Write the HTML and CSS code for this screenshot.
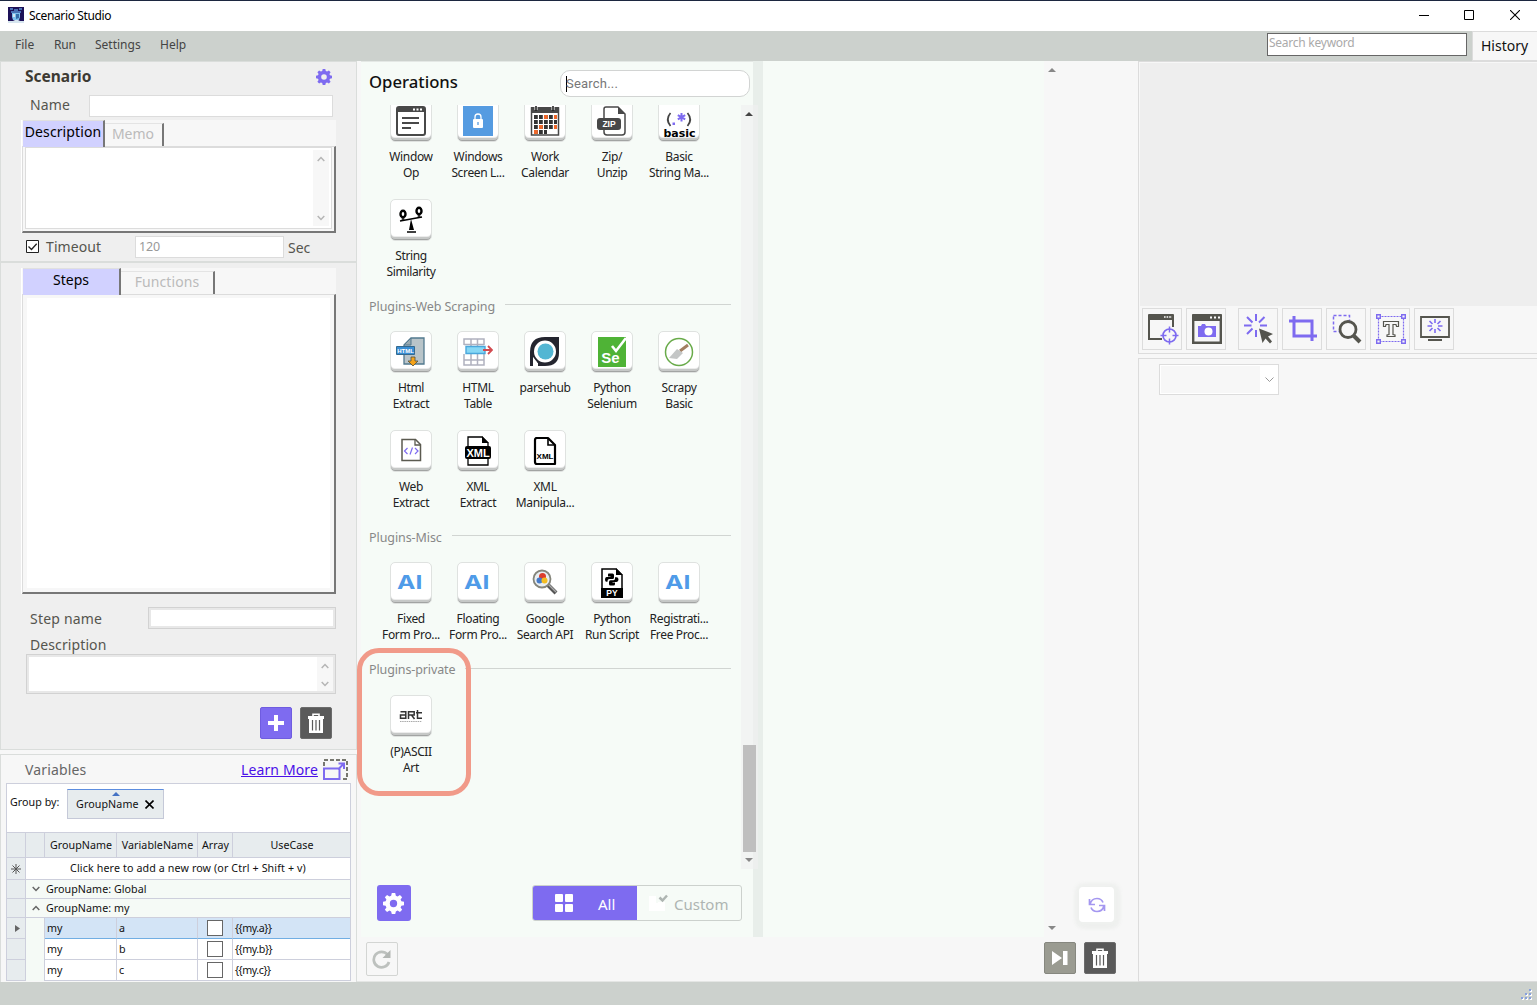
FILE: index.html
```html
<!DOCTYPE html>
<html lang="en">
<head>
<meta charset="utf-8">
<title>Scenario Studio</title>
<link rel="stylesheet" href="styles.css">
</head>
<body>
<svg class="defs" width="0" height="0">
  <symbol id="gear" viewBox="0 0 16 16"><path fill-rule="evenodd" d="M6.7 0h2.6l.5 2 1.3.6L12.900 1.500l1.700 1.700L13.400 5l.6 1.300 2 .4v2.600l-2 .5-.6 1.200 1.200 1.800-1.700 1.700-1.800-1.100-1.300.6-.5 2H6.700l-.5-2-1.300-.6-1.800 1.100-1.700-1.700L2.600 11 2 9.800l-2-.5V6.700l2-.4L2.600 5 1.400 3.200l1.700-1.700 1.800 1.100L6.200 2zM8 5.200a2.800 2.800 0 1 0 0 5.600 2.800 2.800 0 0 0 0-5.600z"/></symbol>
  <symbol id="trash" viewBox="0 0 16 20"><path fill="none" stroke="#fff" stroke-width="1.600" d="M5 3.500V1.200h6v2.300"/><path fill="#fff" d="M0 3h16v3H0zM1 6h14v14H1z"/><path stroke="#5a5a5a" stroke-width="1.200" d="M4.500 7v10.500M8 7v10.500M11.500 7v10.500"/></symbol>
  <symbol id="up" viewBox="0 0 8 6"><path fill="none" stroke="currentColor" stroke-width="1.500" d="M.7 5 4 1.500 7.300 5"/></symbol>
  <symbol id="down" viewBox="0 0 8 6"><path fill="none" stroke="currentColor" stroke-width="1.500" d="M.7 1 4 4.500 7.300 1"/></symbol>
</svg>

<header class="titlebar">
  <svg class="app-icon" width="16" height="16" viewBox="0 0 16 16"><path fill="#1d1158" d="M0 0h16v16H0z"/><path fill="#4972b5" d="M2 1h3v2H2zM6 2h4v2H6zM11 1h3v2h-3zM3 4h10v2H3z"/><path fill="#7cc0ee" d="M4 6h8v4l-1 3H5l-1-3z"/><path fill="#346ba8" d="M8 7h3v4l-3 1z"/><path fill="#d6e5ef" d="M5 7h2v3H5zM0 14h5l2-1h3l2 1h4v2H0z"/></svg>
  <span class="app-title">Scenario Studio</span>
  <div class="win-buttons">
    <svg width="10" height="10" viewBox="0 0 10 10"><path stroke="#000" d="M0 5.500h10"/></svg>
    <svg width="10" height="10" viewBox="0 0 10 10"><path fill="none" stroke="#000" d="M.5.5h9v9h-9z"/></svg>
    <svg width="10" height="10" viewBox="0 0 10 10"><path stroke="#000" stroke-width="1.100" d="m0 0 10 10M10 0 0 10"/></svg>
  </div>
</header>

<nav class="menubar">
  <span class="m-file">File</span><span class="m-run">Run</span><span class="m-settings">Settings</span><span class="m-help">Help</span>
  <div class="keyword">Search keyword</div>
  <div class="history">History</div>
</nav>

<main class="workspace">
  <aside class="left">
    <section class="panel scenario">
      <div class="scenario-head"><h1>Scenario</h1><svg width="16" height="16" fill="#7e6bf0"><use href="#gear"/></svg></div>
      <div class="name-row"><label>Name</label><div class="input"></div></div>
      <div class="tabs tabs-desc">
        <div class="tabstrip"><div class="tab on">Description</div><div class="tab off">Memo</div></div>
        <div class="tabbody"><div class="memo"><div class="vscroll"><svg width="8" height="6"><use href="#up"/></svg><svg width="8" height="6"><use href="#down"/></svg></div></div></div>
      </div>
      <div class="timeout-row">
        <svg width="13" height="13" viewBox="0 0 13 13"><path fill="#fff" stroke="#222" d="M.5.5h12v12H.5z"/><path fill="none" stroke="#222" stroke-width="1.300" d="m2.500 6.500 3 3L10.700 3.800"/></svg>
        <label class="t-label">Timeout</label><div class="input t-value">120</div><span class="t-sec">Sec</span>
      </div>
    </section>

    <section class="panel steps">
      <div class="tabs tabs-steps">
        <div class="tabstrip"><div class="tab on">Steps</div><div class="tab off">Functions</div></div>
        <div class="tabbody"><div class="list"></div></div>
      </div>
      <div class="step-row"><label>Step name</label><div class="thick"></div></div>
      <label class="desc-label">Description</label>
      <div class="thick step-desc"><div class="vscroll"><svg width="8" height="6"><use href="#up"/></svg><svg width="8" height="6"><use href="#down"/></svg></div></div>
      <div class="step-actions">
        <div class="btn violet"><svg width="16" height="16" viewBox="0 0 16 16"><path fill="#fff" d="M6 0h4v6h6v4h-6v6H6v-6H0V6h6z"/></svg></div>
        <div class="btn dark"><svg width="16" height="20"><use href="#trash"/></svg></div>
      </div>
    </section>

    <section class="panel variables">
      <div class="var-head"><span class="var-title">Variables</span><a class="learn">Learn More</a>
        <svg width="26" height="21" viewBox="0 0 26 21"><path fill="none" stroke="#77776f" stroke-width="2" stroke-dasharray="4 2" d="M1 7V1h23v19h-6"/><path fill="none" stroke="#7e6bf0" stroke-width="2" d="M1 9.500h15.500V20H1zM15 10.500l6-6M15.500 4.500H21V10"/></svg></div>
      <div class="grid">
        <div class="groupby"><span>Group by:</span><div class="chip"><i></i><span>GroupName</span><svg width="9" height="9" viewBox="0 0 9 9"><path stroke="#000" stroke-width="1.600" d="m.5.5 8 8M8.500.5l-8 8"/></svg></div></div>
        <div class="row head"><b></b><b></b><b>GroupName</b><b>VariableName</b><b>Array</b><b>UseCase</b></div>
        <div class="row wide add"><b class="mark"><svg width="10" height="10" viewBox="0 0 10 10"><path stroke="#555" d="M5 0v10M0 5h10M1.500 1.500l7 7M8.500 1.500l-7 7"/></svg></b><b class="addtext">Click here to add a new row (or Ctrl + Shift + v)</b></div>
        <div class="row wide group"><b class="mark"></b><b><svg width="8" height="6"><use href="#down"/></svg>GroupName: Global</b></div>
        <div class="row wide group"><b class="mark"></b><b><svg width="8" height="6"><use href="#up"/></svg>GroupName: my</b></div>
        <div class="row data sel"><b class="mark"><svg width="5" height="7" viewBox="0 0 5 7"><path fill="#666" d="M0 0l5 3.500L0 7z"/></svg></b><b></b><b>my</b><b>a</b><b><i></i></b><b>{{my.a}}</b></div>
        <div class="row data"><b class="mark"></b><b></b><b>my</b><b>b</b><b><i></i></b><b>{{my.b}}</b></div>
        <div class="row data"><b class="mark"></b><b></b><b>my</b><b>c</b><b><i></i></b><b>{{my.c}}</b></div>
      </div>
    </section>
  </aside>

  <section class="center">
    <div class="boards">
      <div class="ops">
        <div class="ops-head"><h2>Operations</h2><div class="search"><i></i>Search...</div></div>
        <div class="ops-body">
          <div class="catalog">
            <div class="tiles">
              <div class="op"><div class="tile"><svg viewBox="0 0 30 30"><rect x="1" y="1" width="28" height="28" rx="2" fill="#fff" stroke="#484848" stroke-width="2"/><path fill="#484848" d="M1 1h28v5H1z"/><path stroke="#fff" stroke-width="1.800" stroke-dasharray="2 1.500" d="M17 3.500h10"/><path stroke="#484848" stroke-width="1.800" d="M6 12h17M6 17h17M6 22h9"/></svg></div><p>Window<br>Op</p></div>
              <div class="op"><div class="tile"><svg viewBox="0 0 30 30"><path fill="#559be1" d="M0 0h30v30H0z"/><path fill="none" stroke="#fff" stroke-width="1.300" d="M12 14v-3a3 3 0 0 1 6 0v3"/><rect x="10" y="13" width="10" height="9" rx="1" fill="#fff"/><path stroke="#559be1" stroke-width="1.300" d="M15 16v3"/></svg></div><p>Windows<br>Screen L...</p></div>
              <div class="op"><div class="tile"><svg viewBox="0 0 30 30"><path fill="#fff" stroke="#484848" stroke-width="1.500" d="M1.500 2h27v27h-27z"/><path fill="#484848" d="M1 1h28v6H1z"/><path stroke="#fff" stroke-width="3" d="M6 0v4M23 0v4"/><path stroke="#222" stroke-width="1.600" d="M6 0v5M23 0v5"/><path stroke="#333" stroke-width="3.800" stroke-dasharray="3.800 1.200" d="M4 11h23M4 16h23M4 21h23M4 26h13"/><path fill="#ee682b" d="M14 9.100h3.800v3.800H14zM24 9.100h3v3.800h-3zM9 19.100h3.800v3.800H9zM24 19.100h3v3.800h-3zM4 24.100h3.800v3.800H4z"/></svg></div><p>Work<br>Calendar</p></div>
              <div class="op"><div class="tile"><svg viewBox="0 0 30 30"><path fill="#fff" stroke="#484848" stroke-width="1.500" d="M7 12V3q0-2 2-2h12l7 7v18q0 3-3 3H10q-3 0-3-3z"/><path fill="#484848" d="M21 1v7h7z"/><rect y="12" width="24" height="12" rx="3" fill="#484848"/><text x="12" y="21.300" font-size="8.500" fill="#fff" class="icon-text">ZIP</text></svg></div><p>Zip/<br>Unzip</p></div>
              <div class="op"><div class="tile"><svg viewBox="-3 0 36 30" class="wide-icon"><path fill="none" stroke="#444" stroke-width="1.700" d="M6.500 7q-5.500 6.500 0 13M23.500 7q5.500 6.500 0 13"/><path fill="#7e6bf0" d="M8.500 16.500h2.500V19H8.500z"/><path stroke="#7e6bf0" stroke-width="2" d="M17.500 7v8.500M13.800 9.100l7.400 4.300M21.200 9.100l-7.400 4.300"/><text x="15.500" y="31" font-size="11" class="icon-text basic">basic</text></svg></div><p>Basic<br>String Ma...</p></div>
              <div class="op"><div class="tile"><svg viewBox="0 0 30 30"><path stroke="#000" stroke-width="1.600" d="M4 16 26 12M11 27h9"/><path d="m15 14 3 11h-5z"/><ellipse cx="7" cy="9" rx="2.500" ry="3.300" fill="none" stroke="#000" stroke-width="2.400"/><ellipse cx="23" cy="6" rx="2.500" ry="3.300" fill="none" stroke="#000" stroke-width="2.400"/><path stroke="#000" d="M7 12v4M23 9v4M5.500 14h3M21.500 11h3"/></svg></div><p>String<br>Similarity</p></div>
            </div>
            <h3><span>Plugins-Web Scraping</span></h3>
            <div class="tiles">
              <div class="op"><div class="tile"><svg viewBox="0 0 30 30"><path fill="#b9c4c9" stroke="#52798f" stroke-width="1.300" d="M8 8l7-7h13v26H8z"/><path fill="#9aa9b0" stroke="#52798f" d="M8 8h7V1z"/><path fill="#3a8fd5" stroke="#34698e" d="M.5 9.500h18v8H.5z"/><text x="9.500" y="16" font-size="6" fill="#fff" class="icon-text">HTML</text><path fill="#f5a31a" stroke="#52503d" stroke-width=".8" d="M15 20h4v4h3l-5 5-5-5h3z"/></svg></div><p>Html<br>Extract</p></div>
              <div class="op"><div class="tile"><svg viewBox="0 0 30 30"><path fill="none" stroke="#b0b1bf" stroke-width="1.500" d="M1 8V2h20v6M1 17v11h20V17M8 2v26M14.500 2v26M1 23h20M1 7.500h20"/><path fill="#86d7f5" stroke="#4aa7dc" stroke-width="1.400" d="M3 9.500h19v7H3z"/><path stroke="#d24a50" stroke-width="1.800" fill="none" d="M20 13h9M25 9l4 4-4 4"/></svg></div><p>HTML<br>Table</p></div>
              <div class="op"><div class="tile"><svg viewBox="0 0 30 30"><path fill="#24252f" fill-rule="evenodd" d="M0 29V15Q0 0 15 0h14v16Q29 29 15 29h-7v-3Q4 24 3 20v9zM15 3.500a11 11 0 1 0 0 22 11 11 0 0 0 0-22z"/><path fill="#fff" d="M3 20l4 5v5H3z"/><circle cx="15.500" cy="14.500" r="8" fill="#53b6d3"/></svg></div><p>parsehub</p></div>
              <div class="op"><div class="tile"><svg viewBox="0 0 30 30"><path fill="#4fb336" d="M1 0h28v30H1z"/><path fill="none" stroke="#fff" stroke-width="2.600" d="m15 9 4 5L29 1"/><text x="13.500" y="26" font-size="15" fill="#fff" class="icon-text">Se</text></svg></div><p>Python<br>Selenium</p></div>
              <div class="op"><div class="tile"><svg viewBox="0 0 30 30"><circle cx="15" cy="15" r="13.500" fill="#fff" stroke="#69ab4a" stroke-width="1.500"/><path stroke="#a27f62" stroke-width="3" d="m16 14 8-6"/><path fill="#c4c6c6" d="m13 12 6 4-6 6-8-1z"/></svg></div><p>Scrapy<br>Basic</p></div>
              <div class="op"><div class="tile"><svg viewBox="0 0 30 30"><path fill="#fff" stroke="#5b5a50" stroke-width="1.500" d="M6 3.500h13.500l5 5v16H6z"/><path fill="none" stroke="#5b5a50" stroke-width="1.300" d="M19 3.500V9h5.500"/><path fill="none" stroke="#7e6bf0" stroke-width="1.200" d="m11.500 12-3 3 3 3M19 12l3 3-3 3M16.500 11.500l-2.500 7"/></svg></div><p>Web<br>Extract</p></div>
              <div class="op"><div class="tile"><svg viewBox="0 0 30 30"><path fill="#fff" stroke="#000" stroke-width="1.300" d="M5 1h14l6 6v22H5z"/><path d="M19 0v7h7z"/><rect x="2" y="10" width="26" height="13" rx="2"/><text x="15" y="20.500" font-size="11" fill="#fff" class="icon-text">XML</text></svg></div><p>XML<br>Extract</p></div>
              <div class="op"><div class="tile"><svg viewBox="0 0 30 30"><path fill="#fff" stroke="#000" stroke-width="2.200" stroke-linejoin="round" d="M6 2h12l7 7v19H7q-2 0-2-2V4q0-2 2-2z"/><path fill="none" stroke="#000" stroke-width="1.600" d="M18 2v7h7"/><text x="15" y="23" font-size="8" class="icon-text">XML</text></svg></div><p>XML<br>Manipula...</p></div>
            </div>
            <h3><span>Plugins-Misc</span></h3>
            <div class="tiles">
              <div class="op"><div class="tile"><span class="ai">AI</span></div><p>Fixed<br>Form Pro...</p></div>
              <div class="op"><div class="tile"><span class="ai">AI</span></div><p>Floating<br>Form Pro...</p></div>
              <div class="op"><div class="tile"><svg viewBox="0 0 30 30"><path stroke="#555" stroke-width="4" d="m18 17 8 8"/><path stroke="#aaa" stroke-width="1.500" d="m18 16 8 8"/><circle cx="12" cy="11" r="8.500" fill="#e8eef2" stroke="#85857b" stroke-width="1.800"/><circle cx="12.500" cy="8.500" r="3.500" fill="#dc3d2c"/><circle cx="9.500" cy="12.500" r="3" fill="#477bc8"/><circle cx="14.500" cy="12.500" r="3" fill="#f4bd22"/></svg></div><p>Google<br>Search API</p></div>
              <div class="op"><div class="tile"><svg viewBox="0 0 30 30"><path fill="#fff" stroke="#000" stroke-width="1.500" d="M5 1h14l6 6v22H5z"/><path d="M19 0v7h7zM4 20h22v10H4z"/><path d="M11.500 5.500h4q1.500 0 1.500 1.500v2.500q0 1.500-1.500 1.500h-3q-2 0-2 2v.8H9.500Q8 13.800 8 11.500t1.500-2.500h4V8.500h-2.500V7q0-1.500.5-1.500zM18 9.200h1.500q2 0 2 2.300t-2 2.500h-4v.5H18V16q0 1.500-1.500 1.500h-3Q12 17.500 12 16v-2q0-1.800 1.500-1.800h3Q18 12.200 18 10.500z"/><text x="15" y="28" font-size="8.500" fill="#fff" class="icon-text">PY</text></svg></div><p>Python<br>Run Script</p></div>
              <div class="op"><div class="tile"><span class="ai">AI</span></div><p>Registrati...<br>Free Proc...</p></div>
            </div>
            <h3 class="private"><span>Plugins-private</span></h3>
            <div class="tiles">
              <div class="op"><div class="tile"><svg viewBox="0 0 30 30"><path fill="none" stroke="#333" stroke-width="1.500" d="M4.500 10.700h5.300v6.600H4.500V14h5.300M12.500 18v-7.300h5.700V14h-5M15.500 14l3 4M21.500 9v8.300H26M20 11.700h6"/><path stroke="#aaa" stroke-dasharray="1.500 .7" d="M4 20.500h22"/></svg></div><p>(P)ASCII<br>Art</p></div>
            </div>
          </div>
          <div class="ops-scroll"><svg width="8" height="4" viewBox="0 0 8 4"><path fill="#444" d="M0 4h8L4 0z"/></svg><div class="thumb"></div><svg width="8" height="4" viewBox="0 0 8 4"><path fill="#888" d="M0 0h8L4 4z"/></svg></div>
        </div>
        <div class="ops-foot">
          <div class="gear-btn"><svg width="21" height="21" fill="#fff"><use href="#gear"/></svg></div>
          <div class="toggle"><div class="all"><svg width="18" height="18" viewBox="0 0 18 18" fill="#fff"><rect width="8" height="8" rx="1"/><rect x="10" width="8" height="8" rx="1"/><rect y="10" width="8" height="8" rx="1"/><rect x="10" y="10" width="8" height="8" rx="1"/></svg><span>All</span></div>
          <div class="custom"><svg width="19" height="18" viewBox="0 0 19 18"><path fill="#fff" d="M0 2h7v7H0zM9 8h7v1H9zM0 9h16v8H0z"/><path fill="none" stroke="#aeb5b2" stroke-width="2.500" d="m10.500 3.500 3 3L18 1.500"/></svg><span>Custom</span></div></div>
        </div>
      </div>
      <div class="splitter"></div>
      <div class="flow"></div>
      <div class="flow-side">
        <svg width="8" height="4" viewBox="0 0 8 4"><path fill="#888" d="M0 4h8L4 0z"/></svg>
        <div class="sync"><svg width="18" height="16" viewBox="0 0 18 16"><path fill="none" stroke="#a497f0" stroke-width="1.700" d="M2 7.500C3 3 6 1.500 9 1.500c3 0 5 1.500 6 4M16 8.500c-1 4.500-4 6-7 6-3 0-5-1.500-6-4M1.500 2v5.500H7M16.500 14V8.500H11"/></svg></div>
        <svg width="8" height="4" viewBox="0 0 8 4"><path fill="#888" d="M0 0h8L4 4z"/></svg>
      </div>
    </div>
    <div class="center-foot">
      <div class="reload"><svg width="20" height="20" viewBox="0 0 20 20"><path fill="none" stroke="#bdc1be" stroke-width="2.700" d="M15.500 5.500A7.800 7.800 0 1 0 17 13"/><path fill="#b3b7b4" d="M18.500 1v8h-8z"/></svg></div>
      <div class="btn play"><svg width="16" height="14" viewBox="0 0 16 14"><path fill="#fff" d="M0 0l10 7-10 7zM11 0h4.500v14H11z"/></svg></div>
      <div class="btn dark"><svg width="16" height="20"><use href="#trash"/></svg></div>
    </div>
    <div class="callout"></div>
  </section>

  <aside class="right">
    <section class="preview">
      <div class="canvas"></div>
      <div class="tools">
        <div class="tool"><svg viewBox="0 0 30 30"><path fill="none" stroke="#55554e" stroke-width="2" d="M14 25H1V2h24v11"/><path fill="#55554e" d="M0 1q0-1 1-1h24q1 0 1 1v5H0z"/><path stroke="#fff" stroke-width="1.600" stroke-dasharray="1.600 1" d="M16 3h8"/><circle cx="21.500" cy="21.500" r="6.500" fill="#f7f7f7" stroke="#7e6bf0" stroke-width="1.700"/><path stroke="#7e6bf0" stroke-width="1.500" d="M21.500 12.500v6M21.500 24.500v6M12.500 21.500h6M24.500 21.500h6"/></svg></div>
        <div class="tool"><svg viewBox="0 0 30 30"><path fill="none" stroke="#55554e" stroke-width="2.400" d="M1.200 2h27.600v26.800H1.200z"/><path fill="#55554e" d="M0 1q0-1 1-1h28q1 0 1 1v6H0z"/><path stroke="#fff" stroke-width="2" stroke-dasharray="2 2" d="M18 3.500h10"/><path fill="#7e6bf0" d="M6 12h3l1-2h3l1 2h10v11H6z"/><circle cx="16.500" cy="17.500" r="4" fill="#fff"/></svg></div>
        <div class="tool gap"><svg viewBox="0 0 30 30"><path stroke="#7e6bf0" stroke-width="2" d="M12 0v7M12 16v7M0 11.500h7.500M16 11.500h7M3 3l5.500 5.500M20.500 3 15 8.500M3 20l5.500-5.500"/><path fill="#55554e" d="M15 14.500 29 20l-5 2.500 4 5-2 2-4.500-5-3 4.500z"/></svg></div>
        <div class="tool"><svg viewBox="0 0 30 30"><path fill="none" stroke="#7e6bf0" stroke-width="3" d="M1 7h23v20M6 2v20h23"/></svg></div>
        <div class="tool"><svg viewBox="0 0 30 30"><path fill="none" stroke="#7e6bf0" stroke-width="1.500" stroke-dasharray="3 2" d="M1.500 1.500h16v16h-16z"/><circle cx="16" cy="15.500" r="8" fill="#f7f7f7" stroke="#55554e" stroke-width="2.800"/><path stroke="#55554e" stroke-width="4" d="m22 22 6 6"/></svg></div>
        <div class="tool"><svg viewBox="0 0 30 30"><path fill="none" stroke="#7e6bf0" stroke-width="1.200" stroke-dasharray="2 1" d="M2.500 2.500h25v25h-25z"/><path fill="#f7f7f7" stroke="#7e6bf0" stroke-width="1.400" d="M.7.700h3.600v3.600H.7zM25.700.700h3.600v3.600h-3.600zM.7 25.700h3.600v3.600H.7zM25.700 25.700h3.600v3.600h-3.600z"/><path fill="#f7f7f7" stroke="#55554e" stroke-width="1.200" d="M7.500 7.500h15v5h-2l-.5-2h-3v10l2 .5v1.500h-8V21l2-.5v-10h-3l-.5 2h-2z"/></svg></div>
        <div class="tool"><svg viewBox="0 0 30 30"><path fill="none" stroke="#55554e" stroke-width="1.800" d="M1 3h28v20H1z"/><path stroke="#55554e" stroke-width="2" d="M8 26h14"/><path stroke="#7e6bf0" stroke-width="1.600" d="M15 5v4M15 15v4M7.500 12H12M18 12h4.500M9.500 7l3 3M20.500 7l-3 3M9.500 17l3-3M20.500 17l-3-3"/></svg></div>
      </div>
    </section>
    <section class="inspector"><div class="combo"><div></div><svg width="9" height="6" viewBox="0 0 9 6"><path fill="none" stroke="#999" d="M.5.5l4 4 4-4"/></svg></div></section>
  </aside>
</main>
<footer class="statusbar"><svg width="12" height="12" viewBox="0 0 12 12"><path fill="#fff" d="M9 1h2v2H9zM5 5h2v2H5zM9 5h2v2H9zM1 9h2v2H1zM5 9h2v2H5zM9 9h2v2H9z"/><path fill="#87a0dc" d="M8 0h2v2H8zM4 4h2v2H4zM8 4h2v2H8zM0 8h2v2H0zM4 8h2v2H4zM8 8h2v2H8z"/></svg></footer>
</body>
</html>
```
FILE: styles.css
```css
* { box-sizing: border-box; }
body { margin: 0; width: 1537px; height: 1005px; overflow: hidden; display: flex; flex-direction: column; background: #f7f7f7; font-family: "Noto Sans", sans-serif; font-size: 14px; color: #55554e; white-space: nowrap; }
svg { display: block; flex: none; }
.defs { position: absolute; }
h1, h2, h3, p { margin: 0; font-weight: normal; }
b { font-weight: normal; }

/* window frame */
.titlebar { height: 31px; flex: none; display: flex; align-items: center; background: #fff; border-top: 1px solid #1c2740; padding: 0 0 2px 8px; color: #000; }
.app-title { font-size: 12px; margin-left: 5px; letter-spacing: -0.38px; }
.win-buttons { margin-left: auto; display: flex; gap: 35px; padding-right: 18px; }
.win-buttons svg:last-child { margin-left: 1px; margin-right: -1px; }
.menubar { height: 30px; flex: none; display: flex; background: #ccd1cd; color: #444; font-size: 12px; line-height: 27px; }
.m-file { margin-left: 15px; width: 39px; }
.m-run { width: 41px; letter-spacing: -0.2px; }
.m-settings { width: 65px; }
.keyword { margin: 2px 5px 0 auto; width: 200px; height: 23px; border: 1px solid #666; background: #fff; color: #aaa; line-height: 18px; padding-left: 1px; letter-spacing: -0.25px; }
.history { width: 65px; height: 30px; border: 1px solid #dcdcdc; border-right: 0; background: #f7f7f7; color: #111; font-size: 14px; line-height: 28px; padding-left: 8px; }

/* columns */
.workspace { flex: none; height: 921px; display: flex; }
.left { width: 357px; flex: none; }
.panel { border: 1px solid #dadddb; background: #efefef; }
.scenario { height: 201px; }
.scenario-head { display: flex; justify-content: space-between; align-items: center; height: 30px; padding: 0 24px; }
.scenario-head h1 { font-size: 15.500px; font-weight: bold; color: #3d3a33; margin-top: -3px; }
.input { background: #fff; border: 1px solid #dcdcdc; height: 22px; }
.name-row { display: flex; margin-top: 3px; padding-left: 29px; }
.name-row label { width: 59px; line-height: 20px; letter-spacing: 0.1px; }
.name-row .input { width: 244px; }

.tabs { margin: 3px 0 0 20px; width: 315px; background: #f7f7f7; border-left: 1px solid #fff; }
.tabs-desc { height: 113px; }
.tabstrip { display: flex; height: 26px; align-items: flex-start; }
.tab { text-align: center; border-right: 2px solid #777; }
.tab.on { height: 27px; background: #d1d1ff; color: #000; border-top: 1px solid #e0e0e0; line-height: 22px; margin-left: 1px; }
.tab.off { height: 23px; margin-top: 3px; color: #bbb; border-top: 1px solid #e4e4e4; line-height: 19px; }
.tabs-desc .tab.on { width: 82px; letter-spacing: 0.1px; }
.tabs-desc .tab.off { width: 59px; padding-right: 1px; }
.tabbody { height: 87px; border-top: 1px solid #dcdcdc; border-right: 2px solid #777; border-bottom: 2px solid #777; border-left: 1px solid #dcdcdc; padding: 0 2px 3px 2px; }
.memo { height: 82px; border: 1px solid #dcdcdc; background: #fff; display: flex; justify-content: flex-end; padding: 2px; }
.vscroll { width: 16px; background: #f7f7f7; color: #b5b5b5; display: flex; flex-direction: column; align-items: center; justify-content: space-between; padding: 6px 0 5px; }
.timeout-row { display: flex; align-items: center; margin-top: 3px; height: 22px; padding-left: 25px; }
.timeout-row > svg { margin-top: -2px; }
.t-label { width: 89px; margin: -2px 0 0 7px; letter-spacing: 0.1px; }
.t-value { width: 149px; color: #999; font-size: 12.500px; line-height: 20px; padding-left: 3px; letter-spacing: -0.2px; }
.t-sec { margin-left: 4px; }

.steps { border-top-width: 2px; margin-top: -1px; height: 489px; }
.tabs-steps { height: 326px; margin-top: 5px; }
.tabs-steps .tab.on { width: 98px; }
.tabs-steps .tab.off { width: 94px; letter-spacing: 0.1px; }
.tabs-steps .tabbody { height: 300px; padding: 3px 4px 4px; }
.list { background: #fff; height: 290px; }
.step-row { display: flex; margin-top: 13px; padding-left: 29px; }
.step-row label { width: 118px; line-height: 24px; height: 22px; letter-spacing: 0.2px; }
.thick { background: #fff; border: 1px solid #d2d2d2; box-shadow: inset 0 0 0 2px #e8e8e8; }
.step-row .thick { width: 188px; height: 22px; }
.desc-label { display: block; margin: 5px 0 0 29px; height: 20px; line-height: 22px; letter-spacing: 0.1px; }
.step-desc { width: 310px; height: 40px; margin-left: 25px; display: flex; justify-content: flex-end; padding: 2px; }
.step-desc .vscroll { padding: 6px 0 4px; }
.step-actions { display: flex; gap: 8px; padding-left: 259px; margin-top: 13px; }
.btn { width: 32px; height: 32px; border-radius: 2px; display: flex; align-items: center; justify-content: center; border: 1px solid #888; }
.violet { background: #7e6bf0; border-color: #6f5ce0; }
.dark { background: #5a5a5a; border-color: #6c6c6c; }

/* variables grid */
.variables { margin-top: 4px; height: 229px; background: #f7f7f7; color: #111; }
.var-head { height: 28px; display: flex; align-items: center; padding-left: 24px; font-size: 14px; }
.var-title { width: 216px; color: #666; letter-spacing: 0.15px; }
.learn { color: #4a10e8; text-decoration: underline; width: 82px; letter-spacing: 0.12px; }
.grid { margin-left: 5px; width: 345px; border: 1px solid #cdcfdc; border-bottom: 0; background: #fff; }
.groupby { height: 49px; display: flex; padding: 4px 0 0 3px; border-bottom: 1px solid #cdcfdc; line-height: 28px; font-size: 10.700px; }
.groupby > span { width: 50px; letter-spacing: 0.05px; }
.chip { position: relative; margin: 1px 0 0 7px; width: 97px; height: 30px; border: 1px solid #c5c9d8; border-top: 1px solid #5c8de0; background: #e7ecee; display: flex; align-items: center; gap: 6px; padding-left: 8px; letter-spacing: 0.1px; }
.chip i { position: absolute; left: 44px; top: 2px; border: 4px solid transparent; border-top: 0; border-bottom: 4px solid #4472c4; }
.row { display: grid; grid-template-columns: 19px 19px 72px 81px 35px 1fr; font-size: 10.700px; }
.row b { border-right: 1px solid #cdcfdc; border-bottom: 1px solid #cdcfdc; overflow: hidden; }
.row b:last-child { border-right: 0; }
.head b { background: #e7ecee; text-align: center; height: 25px; line-height: 24px; letter-spacing: 0.05px; padding-left: 1px; }
.wide { grid-template-columns: 19px 1fr; }
.mark { background: #e7ecee; display: flex; align-items: center; justify-content: center; }
.add b { height: 22px; line-height: 20px; }
.addtext { text-align: center; letter-spacing: 0.12px; }
.group b { height: 19px; line-height: 18px; background: #f5faf6; display: flex; align-items: center; gap: 6px; padding-left: 6px; letter-spacing: 0.05px; }
.group svg { color: #666; }
.group .mark, .data .mark { background: #e7ecee; }
.data b { height: 21px; line-height: 20px; padding-left: 2px; }
.data b:last-child { letter-spacing: -0.45px; }
.data b:nth-child(2) { background: #f5faf6; border-bottom: 0; }
.data.sel b:nth-child(n+3) { background: #d3e4f6; border-bottom-color: #71aee3; }
.data b:nth-child(5) { display: flex; align-items: center; justify-content: center; padding: 0; }
.data i { width: 16px; height: 16px; border: 1px solid #666; background: #fff; }

/* center */
.center { position: relative; width: 781px; flex: none; }
.boards { display: flex; height: 876px; padding-left: 4px; }
.ops { width: 392px; background: #f6fbf7; flex: none; border-top: 1px solid #e4e8e5; }
.ops-head { display: flex; height: 43px; padding: 8px 3px 0 8px; justify-content: space-between; }
.ops-head h2 { font-weight: 500; font-size: 16.700px; line-height: 24px; color: #111; }
.search { width: 190px; height: 27px; border: 1px solid #d2d4d3; border-radius: 10px; background: #fff; font-family: Roboto, sans-serif; font-size: 13px; letter-spacing: 0.2px; color: #777; line-height: 25px; padding-left: 5px; display: flex; align-items: center; }
.search i { width: 1px; height: 16px; background: #000; margin-right: -1px; }
.ops-body { height: 764px; display: flex; }
.catalog { width: 380px; overflow: hidden; padding-left: 16px; }
.catalog > .tiles:first-child { margin-top: -5px; }
.tiles { display: grid; grid-template-columns: repeat(5, 67px); grid-auto-rows: 99px; }
.op { display: flex; flex-direction: column; align-items: center; }
.tile { width: 42px; height: 42px; flex: none; border-radius: 5px; border: 1px solid #dfe2e0; background: #fff; box-shadow: inset 0 -1px #a2a4a3, inset 0 -3px #c6c8c7, inset 0 -4px #ececec; display: flex; justify-content: center; align-items: center; }
.tile svg { width: 30px; height: 30px; }
.tile .wide-icon { width: 36px; overflow: visible; }
.op p { margin-top: 7px; font-size: 12px; line-height: 16px; text-align: center; color: #222; letter-spacing: -0.35px; padding-left: 1px; }
.icon-text { font-family: "Liberation Sans", sans-serif; font-weight: bold; text-anchor: middle; }
.icon-text.basic { font-family: "DejaVu Sans", sans-serif; }
.ai { font-family: Inter, sans-serif; font-weight: 700; font-size: 19px; color: #4f9be8; line-height: 20px; transform: scaleX(1.300); margin-left: -2px; }
.catalog h3 { font-size: 12.500px; line-height: 17px; height: 33px; color: #888; margin-left: -8px; width: 362px; display: flex; letter-spacing: -0.08px; }
.catalog h3::after { content: ""; flex: 1; height: 1px; background: #d1d5d2; margin: 6px 0 0 10px; }
.catalog h3.private { height: 34px; letter-spacing: -0.12px; }
.catalog h3.private::after { margin-top: 7px; }
.ops-scroll { width: 17px; margin-right: -5px; z-index: 1; background: rgba(240, 240, 240, 0.6); display: flex; flex-direction: column; align-items: center; padding: 7px 1px 7px 0; flex: none; }
.thumb { width: 13px; height: 107px; background: #bfbfbf; margin: auto 0 6px 1px; }
.ops-foot { display: flex; justify-content: space-between; padding: 16px 11px 0 16px; }
.gear-btn { width: 34px; height: 36px; border-radius: 3px; background: #7e6bf0; display: flex; align-items: center; justify-content: center; padding-right: 2px; }
.toggle { width: 210px; height: 36px; border: 1px solid #ccd1cd; border-radius: 3px; display: flex; overflow: hidden; font-size: 15px; line-height: 36px; }
.all { width: 104px; background: #7e6bf0; color: #fff; display: flex; padding-left: 22px; }
.all svg { margin-top: 8px; }
.all span { margin-left: 25px; }
.custom { flex: 1; color: #aeb5b2; display: flex; padding-left: 12px; }
.custom svg { margin-top: 8px; }
.custom span { margin-left: 6px; }
.splitter { width: 10px; background: #e8eeea; flex: none; }
.flow { width: 281px; background: #f6fbf7; flex: none; }
.flow-side { flex: 1; padding: 7px 0 0 4px; display: flex; flex-direction: column; }
.sync { width: 35px; height: 35px; margin: auto 0 4px 31px; border-radius: 4px; background: #fff; box-shadow: 1px 1px 4px 5px #eff1ef, 1px 2px 6px #ccc; display: flex; align-items: center; justify-content: center; }
.flow-side > svg:last-child { margin-bottom: 7px; }
.center-foot { display: flex; height: 45px; padding: 5px 0 0 9px; border-bottom: 1px solid #e4e6e4; }
.reload { width: 32px; height: 34px; border: 1px solid #d3d5d3; border-radius: 2px; display: flex; align-items: center; justify-content: center; }
.play { margin: 0 8px 0 646px; background: #9a9b91; border-color: #86877f; }
.callout { position: absolute; left: 0; top: 587px; width: 114px; height: 148px; border: 5px solid #f19a89; border-radius: 22px; z-index: 2; }

/* right */
.right { width: 399px; flex: none; }
.preview { height: 293px; border: 1px solid #dcdcdc; border-right: 0; padding: 1px 0 0 1px; }
.canvas { height: 243px; background: #eee; }
.tools { display: flex; gap: 4px; padding: 2px 0 0 2px; }
.tool { width: 40px; height: 42px; border: 1px solid #dcdcdc; display: flex; align-items: center; justify-content: center; padding: 0 0 1px 1px; }
.tool.gap { margin-left: 8px; }
.tool svg { width: 30px; height: 30px; overflow: visible; }
.inspector { margin-top: 4px; height: 624px; border: 1px solid #dcdcdc; border-right: 0; padding: 5px 0 0 20px; }
.combo { width: 120px; height: 31px; border: 1px solid #dcdcdc; background: #fff; display: flex; align-items: center; gap: 5px; padding-left: 1px; }
.combo div { width: 99px; height: 27px; background: #f7f7f7; }

.statusbar { height: 23px; flex: none; background: #ccd1cd; display: flex; justify-content: flex-end; padding: 7px 4px 0 0; }
```
